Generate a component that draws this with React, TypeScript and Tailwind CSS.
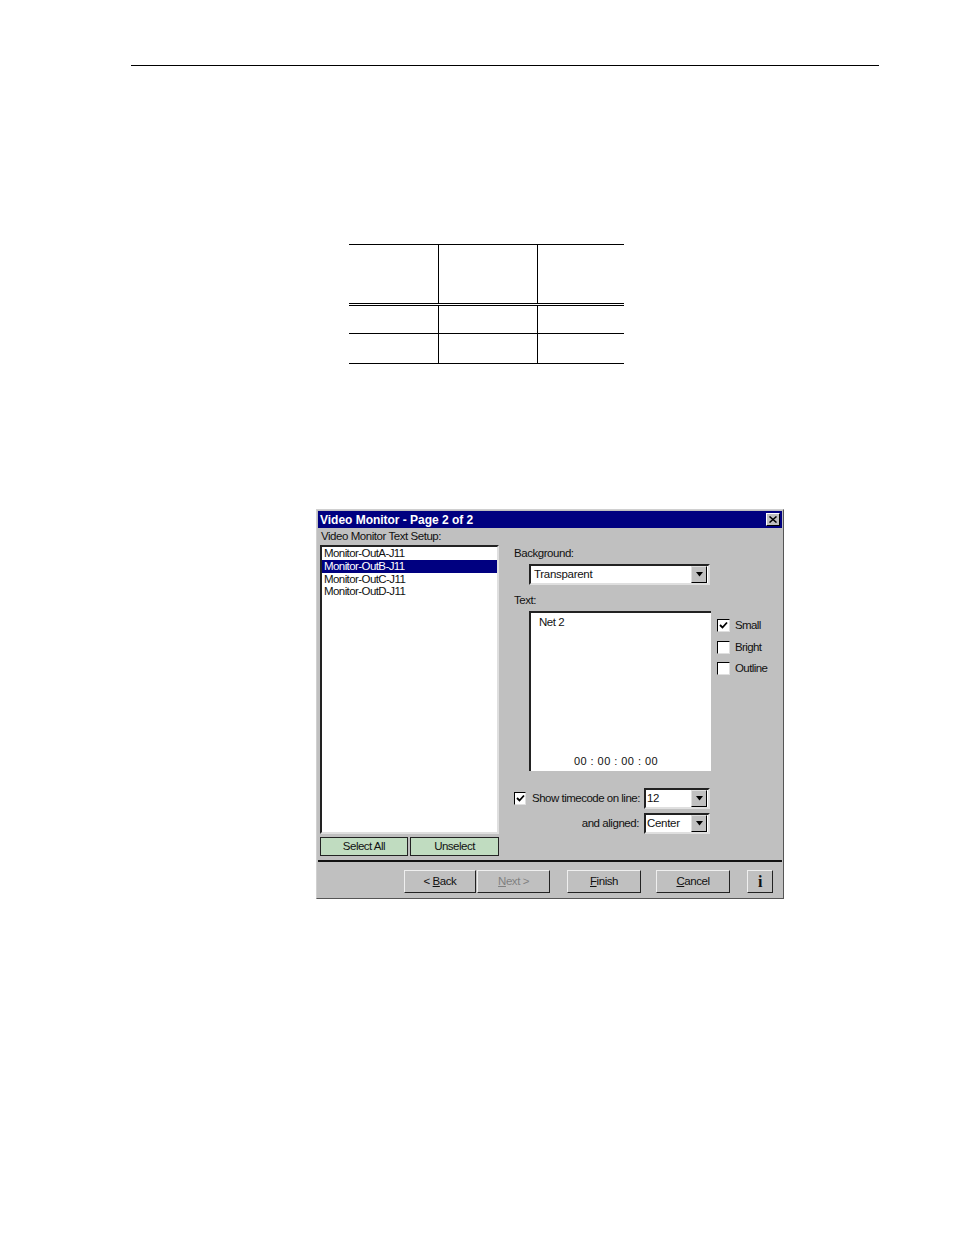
import type { ReactNode } from "react";

const LIST = ["Monitor-OutA-J11", "Monitor-OutB-J11", "Monitor-OutC-J11", "Monitor-OutD-J11"];

function Arrow() {
  return (
    <div className="w-[16px] h-[17px] bg-[#c0c0c0] border border-t-[#dfdfdf] border-l-[#dfdfdf] border-r-black border-b-black flex items-center justify-center">
      <svg width="9" height="5" viewBox="0 0 9 5">
        <path d="M1 0h7L4.5 4.5z" fill="#000" />
      </svg>
    </div>
  );
}

function Combo({ label, className }: { label: string; className: string }) {
  return (
    <div className={`${className} h-[21px] bg-white border-2 border-t-[#222] border-l-[#222] border-r-[#dfdfdf] border-b-[#dfdfdf] flex items-center justify-between pr-[1px] text-[11.5px] tracking-[-0.3px]`}>
      <span className="pt-px">{label}</span>
      <Arrow />
    </div>
  );
}

function Check({ checked, size = "w-[13px] h-[13px]" }: { checked?: boolean; size?: string }) {
  return (
    <div className={`${size} shrink-0 bg-white border border-t-black border-l-black border-r-[#dfdfdf] border-b-[#dfdfdf] flex items-center justify-center`}>
      {checked && (
        <svg width="9" height="9" viewBox="0 0 9 9">
          <path d="M1 4l2.5 2.5L8 1.5" fill="none" stroke="#000" strokeWidth="1.8" />
        </svg>
      )}
    </div>
  );
}

function Btn({ children, className = "", disabled }: { children: ReactNode; className?: string; disabled?: boolean }) {
  return (
    <div className={`h-[23px] flex items-center justify-center border border-t-[#efefef] border-l-[#efefef] border-r-[#222] border-b-[#222] ${disabled ? "text-[#808080]" : "text-[#111]"} ${className}`}>
      {children}
    </div>
  );
}

function GreenBtn({ children, className = "" }: { children: ReactNode; className?: string }) {
  return (
    <div className={`h-[19px] pt-px bg-[#c0dcc0] border border-[#222] flex items-center justify-center text-[11.5px] tracking-[-0.5px] ${className}`}>
      {children}
    </div>
  );
}

function Dialog() {
  return (
    <div className="ml-[316px] w-[468px] h-[390px] bg-[#c0c0c0] border border-t-[#d0d0d0] border-l-[#d0d0d0] border-r-[#555] border-b-[#555] p-px flex flex-col text-[#111] font-['Liberation_Sans',sans-serif]">
      <div className="h-[17px] bg-[#000080] flex items-center justify-between px-[2px] text-white font-bold text-[12px]">
        <span className="tracking-[-0.02px]">Video Monitor - Page 2 of 2</span>
        <div className="w-[14px] h-[13px] bg-[#c0c0c0] border border-t-white border-l-white border-r-black border-b-black flex items-center justify-center">
          <svg width="8" height="7" viewBox="0 0 8 7">
            <path d="M0.5 0.5l7 6M7.5 0.5l-7 6" stroke="#000" strokeWidth="1.5" />
          </svg>
        </div>
      </div>

      <div className="h-[332px] flex text-[11.5px] tracking-[-0.45px]">
        <div className="ml-[2px] w-[179px] flex flex-col">
          <div className="h-[17px] pl-[1px] flex items-center">Video Monitor Text Setup:</div>
          <div className="h-[289px] bg-white border-2 border-t-[#222] border-l-[#222] border-r-[#dfdfdf] border-b-[#dfdfdf] tracking-[-0.58px]">
            {LIST.map((item, i) => (
              <div key={item} className={`${i === 3 ? "h-[12px]" : "h-[13px]"} pl-[2px] flex items-center ${i === 1 ? "bg-[#000080] text-white" : ""}`}>
                {item}
              </div>
            ))}
          </div>
          <div className="mt-[3px] flex gap-[2px]">
            <GreenBtn className="w-[88px]">Select All</GreenBtn>
            <GreenBtn className="w-[89px]">Unselect</GreenBtn>
          </div>
        </div>

        <div className="ml-[15px] flex-1 flex flex-col">
          <div className="mt-[19px] h-[14px] flex items-center">Background:</div>
          <div className="mt-[3px] ml-[15px]">
            <Combo label="Transparent" className="w-[181px] pl-[3px]" />
          </div>
          <div className="mt-[9px] h-[14px] flex items-center">Text:</div>
          <div className="mt-[3px] ml-[15px] flex">
            <div className="w-[182px] h-[160px] bg-white border-t-2 border-l-2 border-t-[#222] border-l-[#222] flex flex-col justify-between">
              <div className="pl-[8px] pt-[1px]">Net 2</div>
              <div className="pb-[2px] pr-[10px] text-center text-[11px] tracking-[0.45px]">00 : 00 : 00 : 00</div>
            </div>
            <div className="ml-[6px] pt-[8px] flex flex-col gap-[8px] tracking-[-0.6px]">
              <div className="h-[13px] flex items-center gap-[5px]"><Check checked />Small</div>
              <div className="h-[13px] mt-px flex items-center gap-[5px]"><Check />Bright</div>
              <div className="h-[13px] flex items-center gap-[5px]"><Check />Outline</div>
            </div>
          </div>
          <div className="mt-[17px] h-[21px] flex items-center">
            <Check checked size="w-[12px] h-[13px]" />
            <span className="ml-[6px] w-[112px] pt-px whitespace-nowrap tracking-[-0.5px]">Show timecode on line:</span>
            <Combo label="12" className="w-[66px] pl-[1px]" />
          </div>
          <div className="mt-[4px] h-[21px] w-[196px] flex items-center justify-end">
            <span className="mr-[5px] whitespace-nowrap">and aligned:</span>
            <Combo label="Center" className="w-[66px] shrink-0 pl-[1px]" />
          </div>
        </div>
      </div>

      <div className="h-[2px] bg-[#111]" />

      <div className="pt-[8px] pl-[86px] flex text-[11.5px] tracking-[-0.45px]">
        <Btn className="w-[72px]"><span>&lt; <u>B</u>ack</span></Btn>
        <Btn className="w-[73px] ml-px" disabled><span><u>N</u>ext &gt;</span></Btn>
        <Btn className="w-[74px] ml-[17px]"><span><u>F</u>inish</span></Btn>
        <Btn className="w-[74px] ml-[15px]"><span><u>C</u>ancel</span></Btn>
        <Btn className="w-[26px] ml-[17px] font-['Liberation_Serif',serif] font-bold text-[16px] text-[#000080]">i</Btn>
      </div>
    </div>
  );
}

export default function App() {
  return (
    <div className="w-[954px] h-[1235px] bg-white pt-[65px] overflow-hidden">
      <div className="ml-[131px] w-[748px] h-px bg-black" />

      <div className="ml-[349px] mt-[178px] w-[275px] border-t border-b border-black">
        <div className="h-[58px] flex">
          <div className="w-[90px] border-r border-black" />
          <div className="w-[99px] border-r border-black" />
        </div>
        <div className="h-[3px] border-t border-b border-black" />
        <div className="h-[28px] flex border-b border-black">
          <div className="w-[90px] border-r border-black" />
          <div className="w-[99px] border-r border-black" />
        </div>
        <div className="h-[29px] flex">
          <div className="w-[90px] border-r border-black" />
          <div className="w-[99px] border-r border-black" />
        </div>
      </div>

      <div className="mt-[145px]">
        <Dialog />
      </div>
    </div>
  );
}
